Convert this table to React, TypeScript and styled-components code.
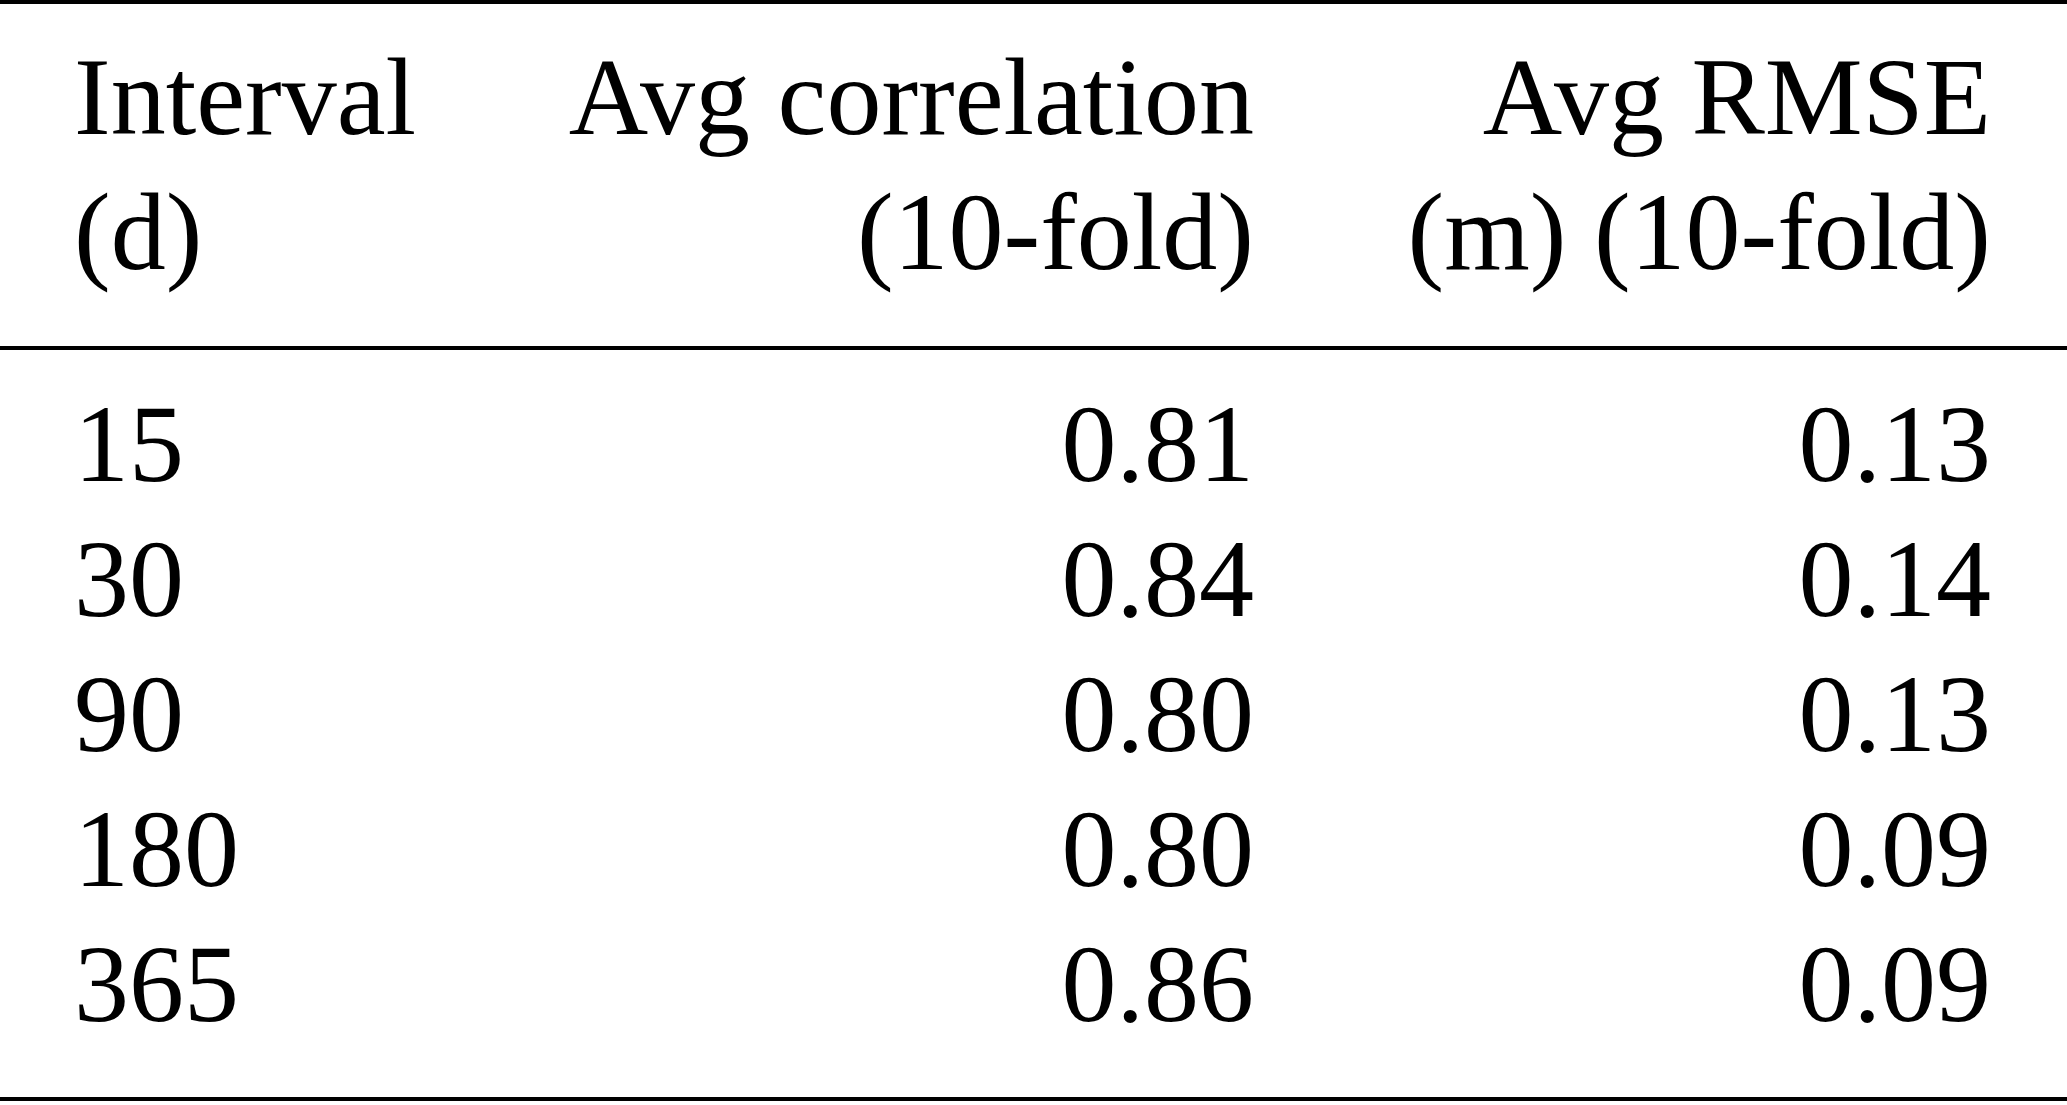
import React from "react";
import styled, { createGlobalStyle } from "styled-components";

const GlobalStyle = createGlobalStyle`
  html, body {
    margin: 0;
    padding: 0;
    background: #ffffff;
  }
  body {
    font-family: "Liberation Serif", "Times New Roman", serif;
    color: #000000;
  }
`;

const Table = styled.div`
  width: 100%;
  border-top: 4px solid #000;
  border-bottom: 4px solid #000;
  font-family: "Liberation Serif", "Times New Roman", serif;
  font-size: 110px;
  line-height: 135px;
  color: #000;
`;

const columns = "360px 820px 1fr";

const Header = styled.div`
  display: grid;
  grid-template-columns: ${columns};
  padding: 26px 76px 46px 74px;
  border-bottom: 4px solid #000;
`;

const Body = styled.div`
  display: flex;
  flex-direction: column;
  padding: 27px 76px 45px 74px;
`;

const Row = styled.div`
  display: grid;
  grid-template-columns: ${columns};
`;

const Cell = styled.div<{ $align: "left" | "right" }>`
  text-align: ${(p) => p.$align};
  white-space: nowrap;
`;

const HeadLine = styled.span`
  display: block;
  white-space: nowrap;
`;

type Datum = { interval: string; corr: string; rmse: string };

const data: Datum[] = [
  { interval: "15", corr: "0.81", rmse: "0.13" },
  { interval: "30", corr: "0.84", rmse: "0.14" },
  { interval: "90", corr: "0.80", rmse: "0.13" },
  { interval: "180", corr: "0.80", rmse: "0.09" },
  { interval: "365", corr: "0.86", rmse: "0.09" },
];

export default function App() {
  return (
    <>
      <GlobalStyle />
      <Table>
        <Header>
          <Cell $align="left">
            <HeadLine>Interval</HeadLine>
            <HeadLine>(d)</HeadLine>
          </Cell>
          <Cell $align="right">
            <HeadLine>Avg correlation</HeadLine>
            <HeadLine>(10-fold)</HeadLine>
          </Cell>
          <Cell $align="right">
            <HeadLine>Avg RMSE</HeadLine>
            <HeadLine>(m) (10-fold)</HeadLine>
          </Cell>
        </Header>
        <Body>
          {data.map((d) => (
            <Row key={d.interval}>
              <Cell $align="left">{d.interval}</Cell>
              <Cell $align="right">{d.corr}</Cell>
              <Cell $align="right">{d.rmse}</Cell>
            </Row>
          ))}
        </Body>
      </Table>
    </>
  );
}
